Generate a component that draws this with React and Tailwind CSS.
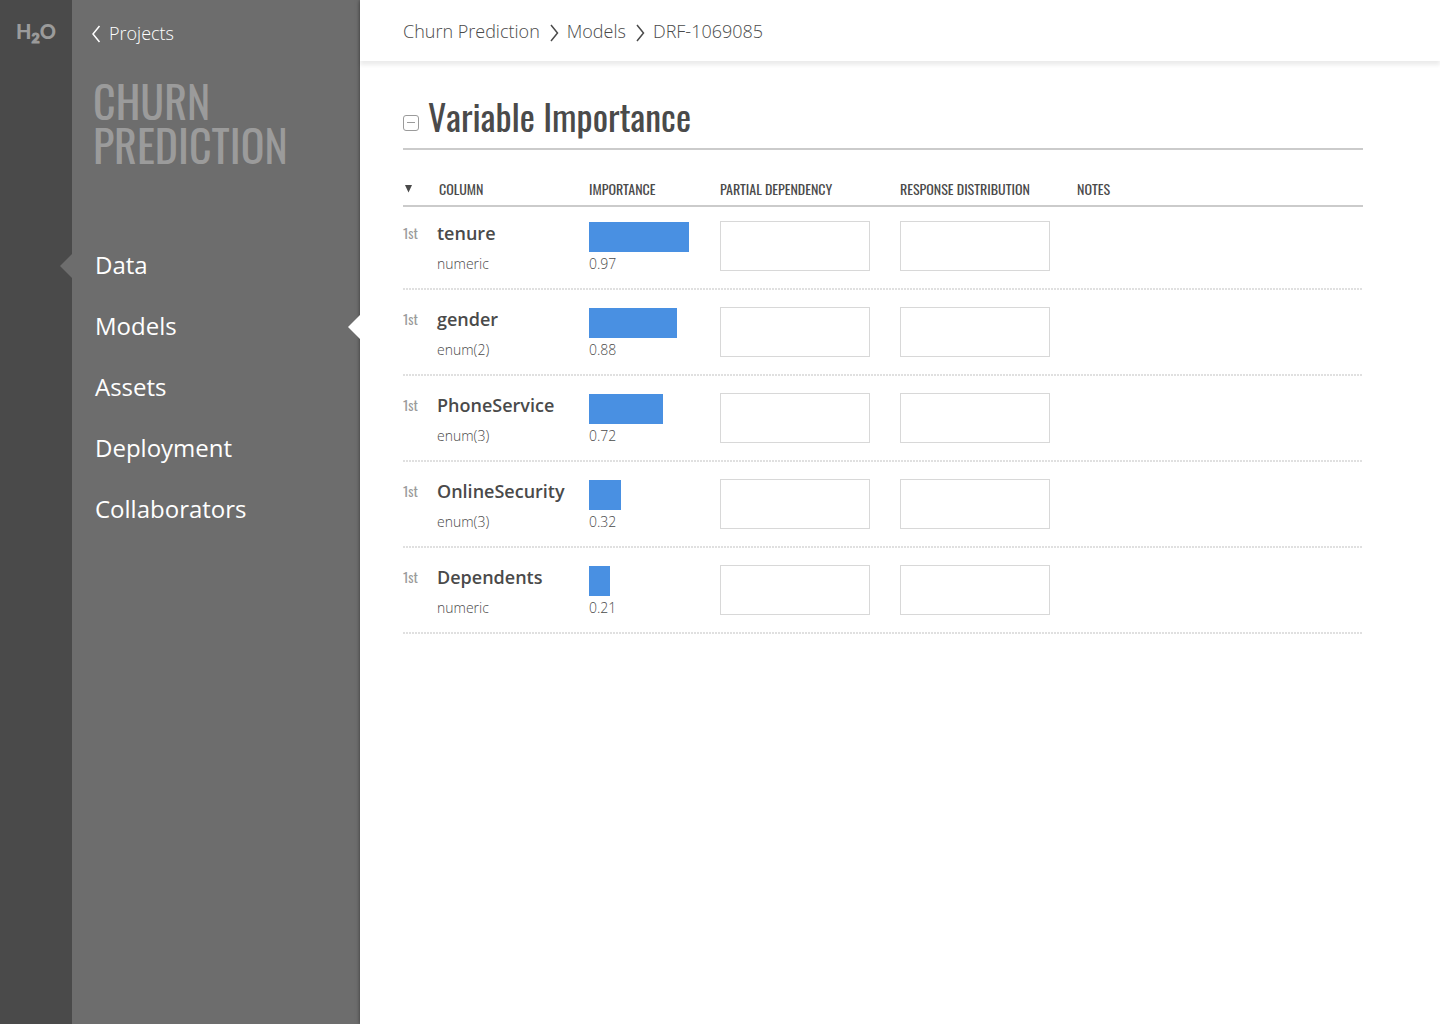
const OSWALD = "font-['Oswald','Roboto_Condensed','Liberation_Sans_Narrow',sans-serif]";

const NAV = ["Data", "Models", "Assets", "Deployment", "Collaborators"];

const ROWS = [
  { rank: "1st", name: "tenure", type: "numeric", value: "0.97", bar: 100 },
  { rank: "1st", name: "gender", type: "enum(2)", value: "0.88", bar: 88 },
  { rank: "1st", name: "PhoneService", type: "enum(3)", value: "0.72", bar: 74 },
  { rank: "1st", name: "OnlineSecurity", type: "enum(3)", value: "0.32", bar: 32 },
  { rank: "1st", name: "Dependents", type: "numeric", value: "0.21", bar: 21 },
];

function Separator() {
  return (
    <svg width="9" height="18" viewBox="0 0 9 18" fill="none" stroke="#4a4a4a" strokeWidth="1.5" className="mt-1 mr-2 ml-2.5" aria-hidden="true">
      <path d="M1 1l6.500 8L1 17" />
    </svg>
  );
}

function Pointer({ className }) {
  return (
    <svg width="12" height="24" viewBox="0 0 12 24" className={className} aria-hidden="true">
      <path d="M12 0v24L0 12z" />
    </svg>
  );
}

function Sidebar() {
  return (
    <>
      <aside className="w-[72px] shrink-0 bg-[#4a4a4a] pt-[18px]">
        <a
          href="#home"
          aria-label="H2O"
          className="flex justify-center font-['Lato',sans-serif] text-xl leading-[26px] font-black text-[#9b9b9b]"
        >
          <span>H</span>
          <span className="pt-2 text-sm leading-6 [-webkit-text-stroke:1px_#9b9b9b]">2</span>
          <span>O</span>
        </a>
      </aside>
      <aside className="w-[288px] shrink-0 bg-[#6d6d6d] pt-[21px] text-white">
        <a href="#projects" className="flex items-center gap-2 pl-5 text-lg leading-6 font-light">
          <svg width="9" height="18" viewBox="0 0 9 18" fill="none" stroke="currentColor" strokeWidth="1.5" className="mt-px" aria-hidden="true">
            <path d="M7.500 1L1 9l6.500 8" />
          </svg>
          Projects
        </a>
        <h2 className={`${OSWALD} mt-[34px] pl-[21px] text-[44px] leading-[44px] text-[#9b9b9b]`}>
          CHURN
          <br />
          PREDICTION
        </h2>
        <nav className="mt-[67px] flex flex-col">
          {NAV.map((item) => (
            <a key={item} href={`#${item.toLowerCase()}`} className="relative pl-[23px] text-2xl leading-[61px]">
              {item}
              {item === "Data" && <Pointer className="absolute top-5 -left-3 fill-[#6d6d6d]" />}
              {item === "Models" && <Pointer className="absolute top-5 right-0 z-10 fill-white" />}
            </a>
          ))}
        </nav>
      </aside>
    </>
  );
}

function ImportanceTable() {
  return (
    <table className="w-full table-fixed border-collapse text-left">
      <colgroup>
        <col className="w-[34px]" />
        <col className="w-[152px]" />
        <col className="w-[131px]" />
        <col className="w-[180px]" />
        <col className="w-[177px]" />
        <col />
      </colgroup>
      <thead>
        <tr className={`${OSWALD} h-[57px] text-sm leading-5 whitespace-nowrap text-[#4a4a4a] shadow-[inset_0_-2px_0_#cbcbcb] *:pt-5 *:font-normal`}>
          <th>
            <button type="button" aria-label="Sort by rank" className="block pl-0.5">
              <svg width="7" height="8" viewBox="0 0 7 8" fill="#4a4a4a" aria-hidden="true">
                <path d="M0 0h7L3.500 7.500z" />
              </svg>
            </button>
          </th>
          <th className="pl-0.5">COLUMN</th>
          <th>IMPORTANCE</th>
          <th>PARTIAL DEPENDENCY</th>
          <th>RESPONSE DISTRIBUTION</th>
          <th>NOTES</th>
        </tr>
      </thead>
      <tbody>
        {ROWS.map((row) => (
          <tr
            key={row.name}
            className="bg-[repeating-linear-gradient(90deg,#e0e0e0_0_2px,transparent_2px_3px)] bg-[length:100%_2px] bg-bottom bg-no-repeat *:pt-[17px] *:pb-4 *:align-top first:*:pt-3.5"
          >
            <td className={`${OSWALD} text-sm leading-6 text-[#9b9b9b]`}>{row.rank}</td>
            <td>
              <div className="text-lg leading-6 font-semibold text-[#4a4a4a]">{row.name}</div>
              <div className="mt-[11px] text-sm leading-4 font-light text-[#4a4a4a]">{row.type}</div>
            </td>
            <td>
              <div className="mt-px h-[30px] bg-[#4990e2]" style={{ width: row.bar }} />
              <div className="mt-1 text-sm leading-4 font-light text-[#4a4a4a]">{row.value}</div>
            </td>
            <td>
              <div className="mb-[3px] h-[50px] w-[150px] border border-[#d8d8d8]" />
            </td>
            <td>
              <div className="h-[50px] w-[150px] border border-[#d8d8d8]" />
            </td>
            <td />
          </tr>
        ))}
      </tbody>
    </table>
  );
}

export default function App() {
  return (
    <div className="flex min-h-screen bg-white font-['Open_Sans',sans-serif]">
      <Sidebar />
      <main className="min-w-0 flex-1 bg-white shadow-[0_0_4px_rgba(0,0,0,0.5)]">
        <header className="bg-white shadow-[0_4px_4px_rgba(0,0,0,0.08)]">
          <nav aria-label="Breadcrumb" className="flex h-[61px] items-center pl-[43px] text-lg font-light text-[#4a4a4a]">
            <a href="#project">Churn Prediction</a>
            <Separator />
            <a href="#models">Models</a>
            <Separator />
            <a href="#model">DRF-1069085</a>
          </nav>
        </header>
        <section className="pt-7 pr-[77px] pl-[43px]">
          <div className="flex h-[61px] items-center gap-[9px] border-b-2 border-[#cbcbcb]">
            <button
              type="button"
              aria-label="Collapse section"
              className="mt-2 flex size-4 items-center justify-center rounded-[3px] border border-[#9b9b9b]"
            >
              <span className="h-px w-2 bg-[#9b9b9b]" />
            </button>
            <h1 className={`${OSWALD} pb-1.5 text-4xl text-[#4a4a4a] [font-kerning:none]`}>Variable Importance</h1>
          </div>
          <ImportanceTable />
        </section>
      </main>
    </div>
  );
}
